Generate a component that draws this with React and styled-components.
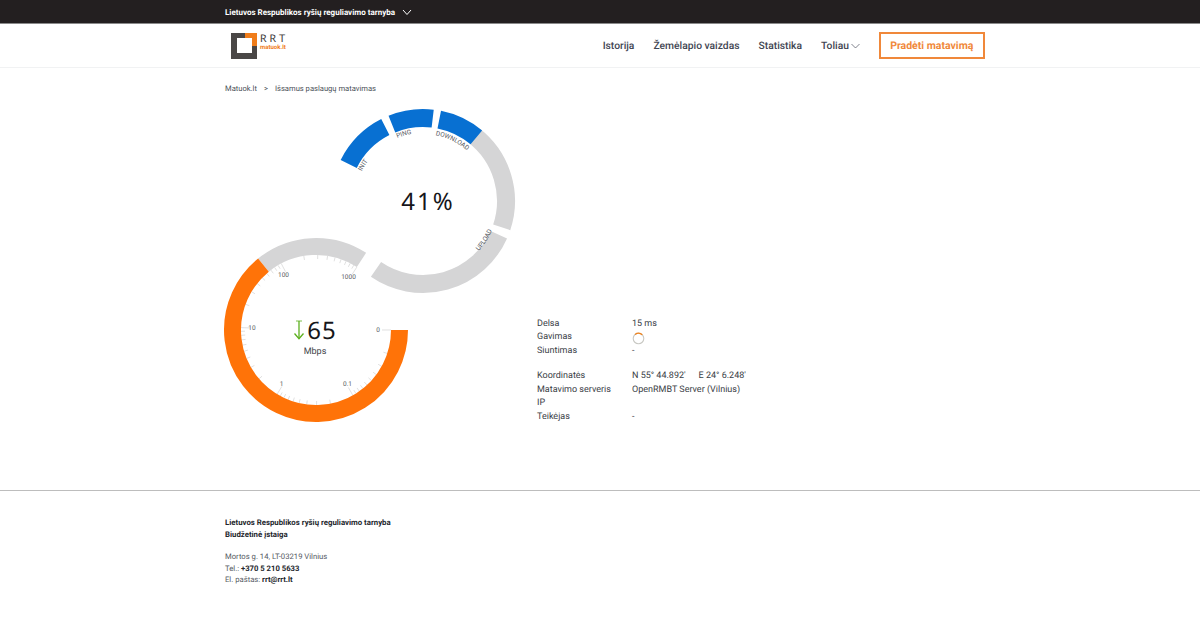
import React from 'react';
import styled, { createGlobalStyle } from 'styled-components';

const FONT = `Roboto, "Noto Sans", Arial, sans-serif`;
const NUMBER_FONT = `"Noto Sans", Roboto, Arial, sans-serif`;

const GlobalStyle = createGlobalStyle`
   html, body {
      margin: 0;
      padding: 0;
      background: #fff;
      font-family: ${FONT};
      text-rendering: geometricPrecision;
   }
`;

// angles are degrees clockwise from the top of the circle
const point = (cx, cy, r, a) => {
   const rad = (a * Math.PI) / 180;
   return [cx + r * Math.sin(rad), cy - r * Math.cos(rad)];
};

const arc = (cx, cy, r, from, to) => {
   const [x0, y0] = point(cx, cy, r, from);
   const [x1, y1] = point(cx, cy, r, to);
   const large = Math.abs(to - from) > 180 ? 1 : 0;
   const sweep = to > from ? 1 : 0;
   return `M${x0} ${y0}A${r} ${r} 0 ${large} ${sweep} ${x1} ${y1}`;
};

const RING = { x: 423, y: 201 };
const DIAL = { x: 316, y: 330 };

const ringLabels = [
   { id: 'init', text: 'INIT', r: 68, from: -80, to: -38 },
   { id: 'ping', text: 'PING', r: 68, from: -38, to: 6 },
   { id: 'download', text: 'DOWNLOAD', r: 67, from: -12, to: 64 },
   { id: 'upload', text: 'UPLOAD', r: 75, from: 150, to: 95 },
];

const dialLabels = [
   { text: '0', x: 378, y: 332 },
   { text: '0.1', x: 347.5, y: 386 },
   { text: '1', x: 281.7, y: 386 },
   { text: '10', x: 252, y: 330 },
   { text: '100', x: 283.5, y: 277 },
   { text: '1000', x: 348.5, y: 279 },
];

const START = 90;
const STEP = 60.6;

const dialTicks = [];
for (let decade = 0; decade < 5; decade++) {
   for (let n = 1; n < 10; n++) {
      const a = START + (decade + Math.log10(n)) * STEP;
      dialTicks.push({ a, major: n === 1 });
   }
}
dialTicks.push({ a: START + 5 * STEP, major: true });

const Gauges = () => (
   <GaugeSvg viewBox='220 105 300 322'>
      <defs>
         {ringLabels.map((l) => (
            <path
               key={l.id}
               id={`label-${l.id}`}
               d={arc(RING.x, RING.y, l.r, l.from, l.to)}
            />
         ))}
      </defs>

      <g fill='none' strokeWidth='18'>
         <path stroke='#d5d5d6' d={arc(RING.x, RING.y, 83, 38, 108.5)} />
         <path stroke='#d5d5d6' d={arc(RING.x, RING.y, 83, 114, 214.5)} />
         <path stroke='#0870d2' d={arc(RING.x, RING.y, 83, -63.5, -27)} />
         <path stroke='#0870d2' d={arc(RING.x, RING.y, 83, -22, 6.7)} />
         <path stroke='#0870d2' d={arc(RING.x, RING.y, 83, 11.3, 40)} />
      </g>

      {ringLabels.map((l) => (
         <RingLabel key={l.id}>
            <textPath href={`#label-${l.id}`} startOffset='50%' textAnchor='middle'>
               {l.text}
            </textPath>
         </RingLabel>
      ))}

      <BigValue x='428' y='210' $spacing={2}>41%</BigValue>

      <g stroke='#d2d2d2' strokeWidth='0.7'>
         {dialTicks.map(({ a, major }) => {
            const [x0, y0] = point(DIAL.x, DIAL.y, 75, a);
            const [x1, y1] = point(DIAL.x, DIAL.y, major ? 66 : 71, a);
            return <line key={a} x1={x0} y1={y0} x2={x1} y2={y1} />;
         })}
      </g>

      <g fill='none' strokeWidth='17'>
         <path stroke='#d5d5d6' d={arc(DIAL.x, DIAL.y, 83.5, -39, 33)} />
         <path stroke='#ff7308' d={arc(DIAL.x, DIAL.y, 83.5, 90, 321)} />
      </g>

      {dialLabels.map((l) => (
         <DialLabel key={l.text} x={l.x} y={l.y}>
            {l.text}
         </DialLabel>
      ))}

      <g fill='none' stroke='#5cb01e' strokeWidth='1.3'>
         <path d='M299 321v17.5' />
         <path d='M296 321h6' strokeWidth='0.8' />
         <path d='M294.5 333.5l4.5 5.2 4.500-5.200' />
      </g>
      <BigValue x='322' y='339' $spacing={1}>65</BigValue>
      <Unit x='315' y='354'>Mbps</Unit>
   </GaugeSvg>
);

const Spinner = () => (
   <svg width='13' height='13' viewBox='0 0 13 13'>
      <circle cx='6.500' cy='6.500' r='5.300' fill='none' stroke='#c9c9c4' strokeWidth='1.100' />
      <path d={arc(6.5, 6.5, 5.3, -40, 45)} fill='none' stroke='#ee8420' strokeWidth='1.300' />
   </svg>
);

const Logo = () => (
   <LogoWrap>
      <svg width='26' height='26' viewBox='0 0 26 26'>
         <rect width='26' height='26' fill='#4a4746' />
         <rect x='14' width='12' height='13' fill='#f07d1a' />
         <rect x='6' y='5' width='15' height='15' fill='#fff' />
      </svg>
      <LogoText>
         <LogoMark>RRT</LogoMark>
         <LogoSub>matuok.lt</LogoSub>
      </LogoText>
   </LogoWrap>
);

const App = () => (
   <>
      <GlobalStyle />
      <TopBar>
         <TopInner>
            Lietuvos Respublikos ryšių reguliavimo tarnyba
            <svg width='10' height='7' viewBox='0 0 10 7'>
               <path d='M1 1l4 4.500 4-4.500' fill='none' stroke='#fff' strokeWidth='1' />
            </svg>
         </TopInner>
      </TopBar>

      <Header>
         <HeaderInner>
            <Logo />
            <Nav>
               <NavLink>Istorija</NavLink>
               <NavLink>Žemėlapio vaizdas</NavLink>
               <NavLink>Statistika</NavLink>
               <NavLink>
                  Toliau
                  <svg width='9' height='6' viewBox='0 0 9 6'>
                     <path d='M.5 1l4 4 4-4' fill='none' stroke='#4a4f5c' strokeWidth='.7' />
                  </svg>
               </NavLink>
               <StartButton>Pradėti matavimą</StartButton>
            </Nav>
         </HeaderInner>
      </Header>

      <Main>
         <Crumbs>
            <span>Matuok.lt</span>
            <CrumbSep>&gt;</CrumbSep>
            <span>Išsamus paslaugų matavimas</span>
         </Crumbs>
         <Content>
            <Gauges />
            <Info>
               <InfoGroup>
                  <span>Delsa</span>
                  <span>15 ms</span>
                  <span>Gavimas</span>
                  <SpinnerCell>
                     <Spinner />
                  </SpinnerCell>
                  <span>Siuntimas</span>
                  <span>-</span>
               </InfoGroup>
               <InfoGroup>
                  <span>Koordinatės</span>
                  <Coords>
                     <span>N 55° 44.892'</span>
                     <span>E 24° 6.248'</span>
                  </Coords>
                  <span>Matavimo serveris</span>
                  <span>OpenRMBT Server (Vilnius)</span>
                  <span>IP</span>
                  <span></span>
                  <span>Teikėjas</span>
                  <span>-</span>
               </InfoGroup>
            </Info>
         </Content>
      </Main>

      <Footer>
         <FooterTitle>
            Lietuvos Respublikos ryšių reguliavimo tarnyba
            <br />
            Biudžetinė įstaiga
         </FooterTitle>
         <FooterText>
            Mortos g. 14, LT-03219 Vilnius
            <br />
            Tel.: <b>+370 5 210 5633</b>
            <br />
            El. paštas: <b>rrt@rrt.lt</b>
         </FooterText>
      </Footer>
   </>
);

export default App;

const TopBar = styled.div`
   height: 23px;
   background: #231f20;
   border-bottom: 1px solid #8a8a8a;
`;

const TopInner = styled.div`
   box-sizing: border-box;
   display: flex;
   align-items: center;
   gap: 7px;
   height: 100%;
   padding: 2px 0 0 225px;
   color: #fff;
   font-size: 8px;
   font-weight: 700;
`;

const Header = styled.header`
   height: 43px;
   border-bottom: 1px solid #f1f2f3;
`;

const HeaderInner = styled.div`
   display: flex;
   align-items: center;
   justify-content: space-between;
   width: 753.500px;
   height: 100%;
   margin-left: 231px;
`;

const LogoWrap = styled.div`
   display: flex;
   align-items: center;
   gap: 3px;
`;

const LogoText = styled.div`
   display: flex;
   flex-direction: column;
   gap: 2px;
   margin-top: -5px;
`;

const LogoMark = styled.span`
   color: #3f3c3b;
   font-family: Lato, ${FONT};
   font-size: 10.500px;
   font-weight: 400;
   line-height: 8px;
   letter-spacing: 3px;
`;

const LogoSub = styled.span`
   color: #f07d1a;
   font-size: 6px;
   font-weight: 700;
   line-height: 6px;
`;

const Nav = styled.nav`
   display: flex;
   align-items: center;
`;

const NavLink = styled.a`
   display: flex;
   align-items: center;
   gap: 2px;
   margin-right: 19px;
   color: #3f4552;
   font-size: 10.300px;
   font-weight: 500;
   white-space: nowrap;
`;

const StartButton = styled.a`
   box-sizing: border-box;
   display: flex;
   align-items: center;
   justify-content: center;
   width: 105.500px;
   height: 27px;
   border: 2px solid #f0883a;
   color: #f0883a;
   font-size: 10.500px;
   font-weight: 700;
   white-space: nowrap;
`;

const Main = styled.main`
   box-sizing: border-box;
   height: 422px;
   padding: 14px 0 0 225px;
`;

const Crumbs = styled.div`
   display: flex;
   align-items: center;
   height: 12px;
   color: #4a4f58;
   font-size: 7.600px;
`;

const CrumbSep = styled.span`
   margin: 0 7px;
`;

const Content = styled.div`
   display: flex;
   align-items: flex-start;
   margin: 11px 0 0 -5px;
`;

const GaugeSvg = styled.svg`
   flex: none;
   width: 300px;
   height: 322px;
`;

const RingLabel = styled.text`
   fill: #55585e;
   font-family: ${FONT};
   font-size: 6.500px;
`;

const BigValue = styled.text`
   fill: #16161a;
   font-family: ${NUMBER_FONT};
   font-size: 24px;
   letter-spacing: ${(props) => props.$spacing}px;
   text-anchor: middle;
`;

const DialLabel = styled.text`
   fill: #55585e;
   font-family: ${FONT};
   font-size: 6.500px;
   text-anchor: middle;
`;

const Unit = styled.text`
   fill: #44464c;
   font-family: ${FONT};
   font-size: 9px;
   text-anchor: middle;
`;

const Info = styled.div`
   display: flex;
   flex-direction: column;
   gap: 12px;
   margin: 212px 0 0 17px;
   color: #3a3e46;
   font-size: 9px;
`;

const InfoGroup = styled.div`
   display: grid;
   grid-template-columns: 95px auto;
   grid-auto-rows: 13.500px;
   align-items: center;
   white-space: nowrap;
`;

const SpinnerCell = styled.span`
   display: flex;
   padding-top: 2px;
`;

const Coords = styled.span`
   display: flex;
   gap: 13px;
`;

const Footer = styled.footer`
   height: 153px;
   box-sizing: border-box;
   border-top: 1px solid #bdbdbd;
   padding: 26px 0 0 225px;
   color: #555a63;
   font-size: 7.700px;
   line-height: 11.500px;
`;

const FooterTitle = styled.div`
   margin-bottom: 11px;
   color: #23262c;
   font-size: 7.800px;
   font-weight: 700;
`;

const FooterText = styled.div`
   b {
      color: #23262c;
      font-weight: 700;
   }
`;
